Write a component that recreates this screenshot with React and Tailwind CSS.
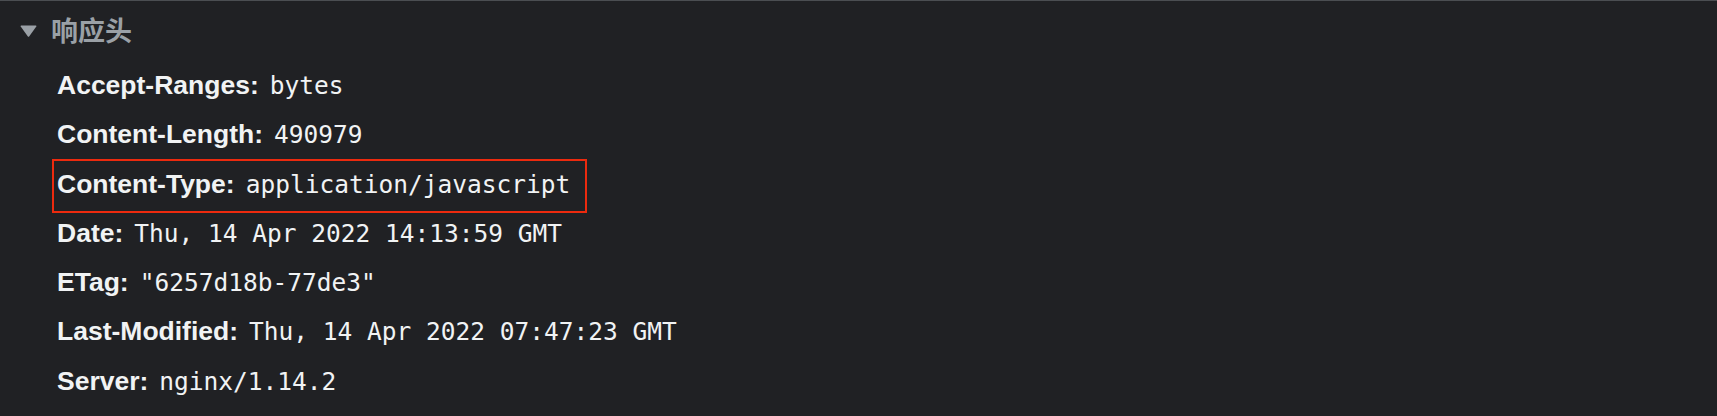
import React from "react";

const headers = [
  { name: "Accept-Ranges", value: "bytes" },
  { name: "Content-Length", value: "490979" },
  { name: "Content-Type", value: "application/javascript", marked: true },
  { name: "Date", value: "Thu, 14 Apr 2022 14:13:59 GMT" },
  { name: "ETag", value: '"6257d18b-77de3"' },
  { name: "Last-Modified", value: "Thu, 14 Apr 2022 07:47:23 GMT" },
  { name: "Server", value: "nginx/1.14.2" },
];

const HeaderRow = ({ name, value, marked }) => (
  <div className="relative h-[49.3px] whitespace-nowrap pl-[57px] leading-[49px]">
    <span className="font-['Liberation_Sans',Arial,sans-serif] text-[26.5px] font-bold text-[#f1f3f4]">
      {name}:
    </span>
    <span className="ml-[11px] font-['DejaVu_Sans_Mono',monospace] text-[24.5px] text-[#f1f3f4]">
      {value}
    </span>
    {/* annotation box */}
    {marked && (
      <span className="pointer-events-none absolute left-[52px] top-[-1px] h-[54px] w-[535px] border-2 border-[#ec2a0e]" />
    )}
  </div>
);

export default function App() {
  return (
    <div className="h-[416px] w-full overflow-hidden border-t border-[#4b4e52] bg-[#202124]">
      {/* Section title */}
      <div className="mt-[5px] flex h-[49px] items-center">
        <svg
          className="ml-[20px]"
          width="17"
          height="12"
          viewBox="0 0 17 12"
          fill="#9aa0a6"
        >
          <path d="M1.2 0.5 L15.8 0.5 Q17 0.5 16.3 1.6 L9.3 11.2 Q8.5 12.2 7.7 11.2 L0.7 1.6 Q0 0.5 1.2 0.5 Z" />
        </svg>
        <span className="ml-[14px] font-['Noto_Sans_CJK_SC',sans-serif] text-[27px] font-bold text-[#9aa0a6]">
          响应头
        </span>
      </div>

      <div className="mt-[6px]">
        {headers.map((h) => (
          <HeaderRow key={h.name} {...h} />
        ))}
      </div>
    </div>
  );
}
